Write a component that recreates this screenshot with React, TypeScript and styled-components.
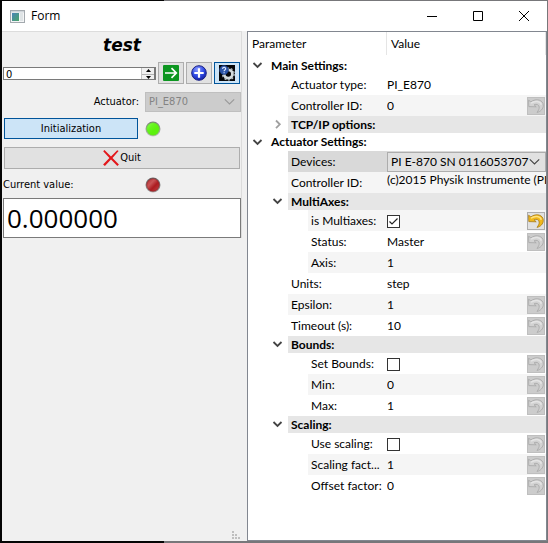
import React, { useState } from "react";
import styled, { createGlobalStyle, css } from "styled-components";

const GlobalStyle = createGlobalStyle`
  * { box-sizing: border-box; }
  body { margin: 0; }
  button, input, select { font: inherit; color: inherit; margin: 0; padding: 0; border-radius: 0; }
`;

const Desktop = styled.div`
  min-height: 100vh;
  display: flex;
  padding: 1px 1px 2px 2px;
  background: linear-gradient(to right, #050505 30%, #77777a 30%);
  font: 11px/14px "DejaVu Sans Condensed", "DejaVu Sans", sans-serif;
  color: #000;
`;

const Window = styled.main`
  flex: 1;
  min-width: 0;
  display: flex;
  flex-direction: column;
  background: #f0f0f0;
`;

const TitleBar = styled.header`
  height: 30px;
  flex: none;
  display: flex;
  align-items: center;
  background: #fff;
  padding-left: 8px;
  font: 12px/16px "Open Sans", sans-serif;
`;

const WindowTitle = styled.span`
  flex: 1;
  margin-left: 6px;
`;

const CaptionButton = styled.button`
  width: 46px;
  height: 30px;
  border: 0;
  background: none;
  display: grid;
  place-items: center;
`;

const Body = styled.div`
  flex: 1;
  display: grid;
  grid-template-columns: 240px minmax(0, 1fr);
  column-gap: 5px;
  min-height: 0;
`;

const ControlPanel = styled.section`
  display: flex;
  flex-direction: column;
`;

const Controls = styled.div`
  border: 1px solid #dcdcdc;
  border-left: 0;
  border-bottom: 0;
  display: flex;
  flex-direction: column;
  padding-left: 1px;
`;

const ActuatorName = styled.h1`
  margin: 0;
  height: 30px;
  text-align: center;
  font: italic bold 17px/26px "DejaVu Sans", sans-serif;
`;

const ToolRow = styled.div`
  display: flex;
  align-items: center;
  gap: 2px;
  height: 22px;
  padding-right: 1px;
`;

const SpinBox = styled.div`
  flex: 1;
  min-width: 0;
  height: 13px;
  display: flex;
  border: 1px solid #7a7a7a;
  border-right-width: 2px;
  background: #fff;
  overflow: hidden;
`;

const SpinInput = styled.input`
  flex: 1;
  min-width: 0;
  border: 0;
  outline: 0;
  padding-left: 2px;
  background: none;
  height: 14px;
`;

const SpinButtons = styled.div`
  width: 13px;
  display: grid;
  grid-template-rows: 7px 7px;
  background: #f0f0f0;
  border-left: 1px solid #c4c4c4;
`;

const SpinButton = styled.button`
  border: 0;
  border-bottom: 1px solid #b4b4b4;
  background: none;
  display: grid;
  place-items: center;
`;

const PushButton = styled.button<{ $checked?: boolean }>`
  border: 1px solid ${(p) => (p.$checked ? "#00549a" : "#adadad")};
  background: ${(p) => (p.$checked ? "#cce4f7" : "#e1e1e1")};
  display: flex;
  align-items: center;
  justify-content: center;
  gap: 1px;
`;

const ToolButton = styled(PushButton)`
  width: 26px;
  height: 22px;
`;

const WideButton = styled(PushButton)`
  height: 22px;
  margin: 8px 1px 0;
`;

const PairRow = styled.div<{ $top: number }>`
  display: grid;
  grid-template-columns: 136px 1fr;
  column-gap: 6px;
  align-items: center;
  min-height: 21px;
  margin-top: ${(p) => p.$top}px;
`;

const FieldLabel = styled.label`
  justify-self: end;
`;

const InitButton = styled(PushButton)`
  height: 21px;
  margin: 0 1px;
`;

const ComboFrame = styled.span<{ $disabled?: boolean }>`
  display: grid;
  grid-template-columns: minmax(0, 1fr) 16px;
  align-items: center;
  height: 20px;
  border: 1px solid ${(p) => (p.$disabled ? "#bfbfbf" : "#adadad")};
  background: ${(p) => (p.$disabled ? "#cccccc" : "#e1e1e1")};
  color: ${(p) => (p.$disabled ? "#838383" : "#000")};
  > * { grid-row: 1; }
  > svg { grid-column: 2; pointer-events: none; }
`;

const ComboSelect = styled.select`
  grid-column: 1 / -1;
  appearance: none;
  border: 0;
  outline: 0;
  background: none;
  height: 18px;
  padding: 0 16px 0 3px;
  opacity: 1;
`;

const ValueDisplay = styled.output`
  height: 40px;
  margin-top: 3px;
  padding: 0 3px;
  border: 1px solid #7a7a7a;
  background: #fff;
  font: 26px/38px "Open Sans", sans-serif;
`;

const GripRow = styled.footer`
  margin-top: auto;
  display: flex;
  justify-content: flex-end;
  padding: 0 1px 1px 0;
`;

const TreePane = styled.section`
  min-width: 0;
  border: 1px solid #828790;
  background: #fff;
  overflow: hidden;
`;

const Tree = styled.table`
  width: 100%;
  table-layout: fixed;
  border-collapse: collapse;
  font: 12px/16px Lato, sans-serif;
  td, th { padding: 0; text-align: left; white-space: nowrap; }
`;

const HeadCell = styled.th`
  font-weight: 400;
  height: 25px;
  > div {
    height: 23px;
    margin-bottom: 2px;
    padding-left: 4px;
    line-height: 23px;
    border-right: 1px solid #e5e5e5;
  }
`;

type Tone = "plain" | "alt" | "group" | "selected";
const tones: Record<Tone, string> = {
  plain: "#fff",
  alt: "#f5f5f5",
  group: "#e6e6e6",
  selected: "#d9d9d9",
};

const Row = styled.tr<{ $height: number }>`
  height: ${(p) => p.$height}px;
`;

const toned = css<{ $tone: Tone }>`
  background: ${(p) => tones[p.$tone]};
`;

const GroupCell = styled.th<{ $tone: Tone }>`
  ${toned}
  && { padding-left: 3px; }
  font-weight: 700;
`;

const LabelCell = styled.th<{ $tone: Tone }>`
  ${toned}
  && { padding-left: 3px; }
  font-weight: 400;
`;

const ValueCell = styled.td<{ $tone: Tone; $top?: boolean }>`
  ${toned}
  overflow: hidden;
  vertical-align: ${(p) => (p.$top ? "top" : "middle")};
`;

const Toggle = styled.button`
  display: grid;
  place-items: center;
  width: 19px;
  height: 17px;
  border: 0;
  background: none;
`;

const ResetButton = styled.button`
  display: grid;
  place-items: center;
  width: 18px;
  height: 18px;
  margin-left: 1px;
  border: 1px solid #bfbfbf;
  background: #cccccc;
  &:enabled { background: #e1e1e1; border-color: #adadad; }
`;

const CheckBox = styled.input`
  appearance: none;
  display: block;
  width: 13px;
  height: 13px;
  border: 1px solid #333;
  background: #fff;
`;

const CheckFrame = styled.span`
  display: inline-grid;
  vertical-align: middle;
  > * { grid-area: 1 / 1; }
  > svg { pointer-events: none; }
`;

const Chevron = ({ color = "#444", right = false, thick = false }) => (
  <svg width="11" height="11" viewBox="0 0 11 11" fill="none" stroke={color} strokeWidth={thick ? 1.8 : 1.1} aria-hidden="true">
    <path d={right ? "M4 1.5 7.8 5.3 4 9.1" : thick ? "M1.5 3 5.5 7 9.5 3" : "M.8 3.3 5.5 8 10.2 3.3"} />
  </svg>
);

const Led = ({ on }: { on: boolean }) => (
  <svg width="16" height="16" viewBox="0 0 16 16" role="img" aria-label={on ? "ready" : "idle"}>
    <defs>
      <linearGradient id={on ? "rimOn" : "rimOff"} x1="0" y1="0" x2="0" y2="1">
        <stop offset="0" stopColor={on ? "#777" : "#666"} />
        <stop offset="1" stopColor={on ? "#c8c8c8" : "#aaa"} />
      </linearGradient>
      <linearGradient id={on ? "bulbOn" : "bulbOff"} x1="0" y1="0" x2="1" y2="1">
        <stop offset="0" stopColor={on ? "#8dff58" : "#b02a2e"} />
        <stop offset=".35" stopColor={on ? "#66f51c" : "#c85456"} />
        <stop offset=".6" stopColor={on ? "#5cf20c" : "#ad1c20"} />
        <stop offset="1" stopColor={on ? "#5ef20c" : "#c04548"} />
      </linearGradient>
    </defs>
    <circle cx="8" cy="8" r="7.5" fill={`url(#${on ? "rimOn" : "rimOff"})`} />
    <circle cx="8" cy="8" r="6.3" fill={`url(#${on ? "bulbOn" : "bulbOff"})`} stroke={on ? "#69cc3c" : "#8d2023"} strokeWidth=".6" />
  </svg>
);

const UndoIcon = ({ active }: { active: boolean }) => (
  <svg width="16" height="16" viewBox="0 0 16 16" aria-hidden="true">
    <path
      d="M.6 2.2.8 8.6l7.4.2-2.1-2C8.4 5.7 11 6.600 11.200 9c.1 2-.8 3.600-2.200 5.400 3.500-.8 6.300-3.400 6.300-7C15.300 2 8.300-.2 2.900 3.900z"
      fill={active ? "#f0b81c" : "#d2d2d2"}
      stroke={active ? "#a67a16" : "#a6a6a6"}
      strokeWidth=".8"
      strokeLinejoin="round"
    />
    <path d="M3 5.200C6.500 2.500 12.300 2.700 13.300 6.800" fill="none" stroke={active ? "#ffe380" : "#e4e4e4"} strokeWidth="1.500" />
  </svg>
);

const AppIcon = () => (
  <svg width="15" height="13" viewBox="0 0 15 13" aria-hidden="true">
    <defs>
      <linearGradient id="appFill" x1="0" y1="0" x2="1" y2="1">
        <stop offset="0" stopColor="#4b84b8" />
        <stop offset="1" stopColor="#4aa568" />
      </linearGradient>
    </defs>
    <rect x=".5" y=".5" width="14" height="12" fill="#f4f5f6" stroke="#a3a9ae" />
    <rect x="1" y="1" width="13" height="1.5" fill="#cfd5da" />
    <rect x="2" y="3" width="7" height="8" fill="url(#appFill)" />
    <rect x="10" y="3" width="3" height="8" fill="#dfe4e6" />
  </svg>
);

const GoIcon = () => (
  <svg width="16" height="16" viewBox="0 0 16 16" aria-hidden="true">
    <rect width="16" height="16" rx="1" fill="#0c9620" />
    <path d="M2 8h11M8.5 3.2 13.3 8l-4.8 4.8" fill="none" stroke="#fff" strokeWidth="1.7" />
  </svg>
);

const PlusIcon = () => (
  <svg width="16" height="16" viewBox="0 0 16 16" aria-hidden="true">
    <defs>
      <radialGradient id="plusFill" cx=".4" cy=".25" r=".8">
        <stop offset="0" stopColor="#8a9cff" />
        <stop offset=".55" stopColor="#304be6" />
        <stop offset="1" stopColor="#101c9c" />
      </radialGradient>
    </defs>
    <circle cx="8" cy="8" r="7.3" fill="url(#plusFill)" stroke="#1a2185" />
    <path d="M8 3.3v9.4M3.3 8h9.4" stroke="#fff" strokeWidth="2.2" />
  </svg>
);

const SettingsIcon = () => (
  <svg width="16" height="16" viewBox="0 0 16 16" aria-hidden="true">
    <rect width="16" height="16" fill="#050608" />
    <circle cx="9.3" cy="9" r="4.1" fill="none" stroke="#d3dbdc" strokeWidth="2.8" />
    <circle cx="9.3" cy="9" r="5.9" fill="none" stroke="#b5bfc2" strokeWidth="1.3" strokeDasharray="2 1.7" />
    <circle cx="5" cy="5" r="4.5" fill="#2c55a8" stroke="#173571" strokeWidth=".6" />
    <path d="M3.5 3.9C3.7 1.8 6.9 2 6.6 4.1 6.4 5 5.1 5.1 5.1 6.2M5.1 7.2v1.1" fill="none" stroke="#d9e6ff" strokeWidth="1.2" />
  </svg>
);

const QuitIcon = () => (
  <svg width="16" height="16" viewBox="0 0 16 16" aria-hidden="true">
    <path d="M.2 1.300 1.500.1 8 6.400 14.200.2l1.400.7L9.500 8l6.400 6.600-1.500 1.300L8 9.600 1.900 15.900.1 14.600 6.400 8z" fill="#e3171b" />
  </svg>
);

const Grip = () => (
  <svg width="9" height="9" viewBox="0 0 9 9" fill="#bfbfbf" aria-hidden="true">
    <path d="M0 0h2v2H0zM0 3h2v2H0zM3 3h2v2H3zM0 6h2v2H0zM3 6h2v2H3zM6 6h2v2H6z" />
  </svg>
);

type Item = {
  label: string;
  level: number;
  group?: boolean;
  closed?: boolean;
  value?: string;
  check?: boolean;
  combo?: boolean;
  top?: boolean;
  reset?: "on" | "off";
  tone?: Tone;
};

const items: Item[] = [
  { label: "Main Settings:", level: 0, group: true, tone: "plain" },
  { label: "Actuator type:", level: 1, value: "PI_E870" },
  { label: "Controller ID:", level: 1, value: "0", reset: "off", tone: "alt" },
  { label: "TCP/IP options:", level: 1, group: true, closed: true },
  { label: "Actuator Settings:", level: 0, group: true, tone: "plain" },
  { label: "Devices:", level: 1, value: "PI E-870 SN 0116053707", combo: true, tone: "selected" },
  { label: "Controller ID:", level: 1, value: "(c)2015 Physik Instrumente (PI", top: true, tone: "alt" },
  { label: "MultiAxes:", level: 1, group: true },
  { label: "is Multiaxes:", level: 2, check: true, reset: "on", tone: "alt" },
  { label: "Status:", level: 2, value: "Master", reset: "off" },
  { label: "Axis:", level: 2, value: "1", tone: "alt" },
  { label: "Units:", level: 1, value: "step" },
  { label: "Epsilon:", level: 1, value: "1", reset: "off", tone: "alt" },
  { label: "Timeout (s):", level: 1, value: "10", reset: "off" },
  { label: "Bounds:", level: 1, group: true },
  { label: "Set Bounds:", level: 2, check: false, reset: "off" },
  { label: "Min:", level: 2, value: "0", reset: "off", tone: "alt" },
  { label: "Max:", level: 2, value: "1", reset: "off" },
  { label: "Scaling:", level: 1, group: true },
  { label: "Use scaling:", level: 2, check: false, reset: "off" },
  { label: "Scaling fact...", level: 2, value: "1", reset: "off", tone: "alt" },
  { label: "Offset factor:", level: 2, value: "0", reset: "off" },
];

const CheckField = ({ label, initial }: { label: string; initial: boolean }) => {
  const [checked, setChecked] = useState(initial);
  return (
    <CheckFrame>
      <CheckBox type="checkbox" aria-label={label} checked={checked} onChange={(e) => setChecked(e.target.checked)} />
      {checked && (
        <svg width="13" height="13" viewBox="0 0 13 13" fill="none" stroke="#222" strokeWidth="1.2" aria-hidden="true">
          <path d="M2.5 6.5 5 9l5.5-5.5" />
        </svg>
      )}
    </CheckFrame>
  );
};

const TreeRow = ({ item }: { item: Item }) => {
  const { label, level } = item;
  if (item.group) {
    return (
      <Row $height={level === 0 && label.startsWith("Actuator") ? 18 : 17}>
        {level > 0 && <td colSpan={level} />}
        <td>
          <Toggle aria-label={label} aria-expanded={!item.closed}>
            <Chevron thick right={item.closed} color={item.closed ? "#a0a0a0" : "#444"} />
          </Toggle>
        </td>
        <GroupCell scope="row" colSpan={5 - level} $tone={item.tone ?? "group"}>{label}</GroupCell>
      </Row>
    );
  }
  const tone = item.tone ?? "plain";
  return (
    <Row $height={21}>
      <td colSpan={level + 1} />
      <LabelCell scope="row" colSpan={3 - level} $tone={tone}>{label}</LabelCell>
      <ValueCell colSpan={item.reset ? 1 : 2} $tone={tone} $top={item.top}>
        {item.combo ? (
          <ComboFrame>
            <ComboSelect aria-label={label}>
              <option>{item.value}</option>
            </ComboSelect>
            <Chevron />
          </ComboFrame>
        ) : item.check !== undefined ? (
          <CheckField label={label} initial={item.check} />
        ) : (
          item.value
        )}
      </ValueCell>
      {item.reset && (
        <ValueCell $tone={tone}>
          <ResetButton disabled={item.reset === "off"} aria-label={`Reset ${label}`}>
            <UndoIcon active={item.reset === "on"} />
          </ResetButton>
        </ValueCell>
      )}
    </Row>
  );
};

export default function App() {
  const [position, setPosition] = useState(0);
  return (
    <>
      <GlobalStyle />
      <Desktop>
        <Window>
          <TitleBar>
            <AppIcon />
            <WindowTitle>Form</WindowTitle>
            <CaptionButton aria-label="Minimize">
              <svg width="10" height="10" stroke="#000"><path d="M0 5.5h10" /></svg>
            </CaptionButton>
            <CaptionButton aria-label="Maximize">
              <svg width="10" height="10" stroke="#000" fill="none"><path d="M.5.5h9v9h-9z" /></svg>
            </CaptionButton>
            <CaptionButton aria-label="Close">
              <svg width="10" height="10" stroke="#000"><path d="M0 0l10 10M10 0 0 10" /></svg>
            </CaptionButton>
          </TitleBar>
          <Body>
            <ControlPanel>
              <Controls>
                <ActuatorName>test</ActuatorName>
                <ToolRow>
                  <SpinBox>
                    <SpinInput aria-label="Position" value={position} onChange={(e) => setPosition(Number(e.target.value) || 0)} />
                    <SpinButtons>
                      <SpinButton aria-label="Increase" onClick={() => setPosition(position + 1)}>
                        <svg width="5" height="3"><path d="M0 3 2.5 0 5 3z" /></svg>
                      </SpinButton>
                      <SpinButton aria-label="Decrease" onClick={() => setPosition(position - 1)}>
                        <svg width="5" height="3"><path d="M0 0 2.5 3 5 0z" /></svg>
                      </SpinButton>
                    </SpinButtons>
                  </SpinBox>
                  <ToolButton aria-label="Move"><GoIcon /></ToolButton>
                  <ToolButton aria-label="Add"><PlusIcon /></ToolButton>
                  <ToolButton aria-label="Settings" $checked><SettingsIcon /></ToolButton>
                </ToolRow>
                <PairRow $top={7}>
                  <FieldLabel htmlFor="actuator">Actuator:</FieldLabel>
                  <ComboFrame $disabled>
                    <ComboSelect id="actuator" disabled>
                      <option>PI_E870</option>
                    </ComboSelect>
                    <Chevron color="#999" />
                  </ComboFrame>
                </PairRow>
                <PairRow $top={6}>
                  <InitButton $checked>Initialization</InitButton>
                  <Led on />
                </PairRow>
                <WideButton><QuitIcon />Quit</WideButton>
                <PairRow $top={5}>
                  <span>Current value:</span>
                  <Led on={false} />
                </PairRow>
                <ValueDisplay>0.000000</ValueDisplay>
              </Controls>
              <GripRow><Grip /></GripRow>
            </ControlPanel>
            <TreePane>
              <Tree>
                <colgroup>
                  <col width="20" />
                  <col width="20" />
                  <col width="20" />
                  <col width="79" />
                  <col />
                  <col width="20" />
                </colgroup>
                <thead>
                  <tr>
                    <HeadCell scope="col" colSpan={4}><div>Parameter</div></HeadCell>
                    <HeadCell scope="col" colSpan={2}><div>Value</div></HeadCell>
                  </tr>
                </thead>
                <tbody>
                  {items.map((item, i) => <TreeRow key={i} item={item} />)}
                </tbody>
              </Tree>
            </TreePane>
          </Body>
        </Window>
      </Desktop>
    </>
  );
}
